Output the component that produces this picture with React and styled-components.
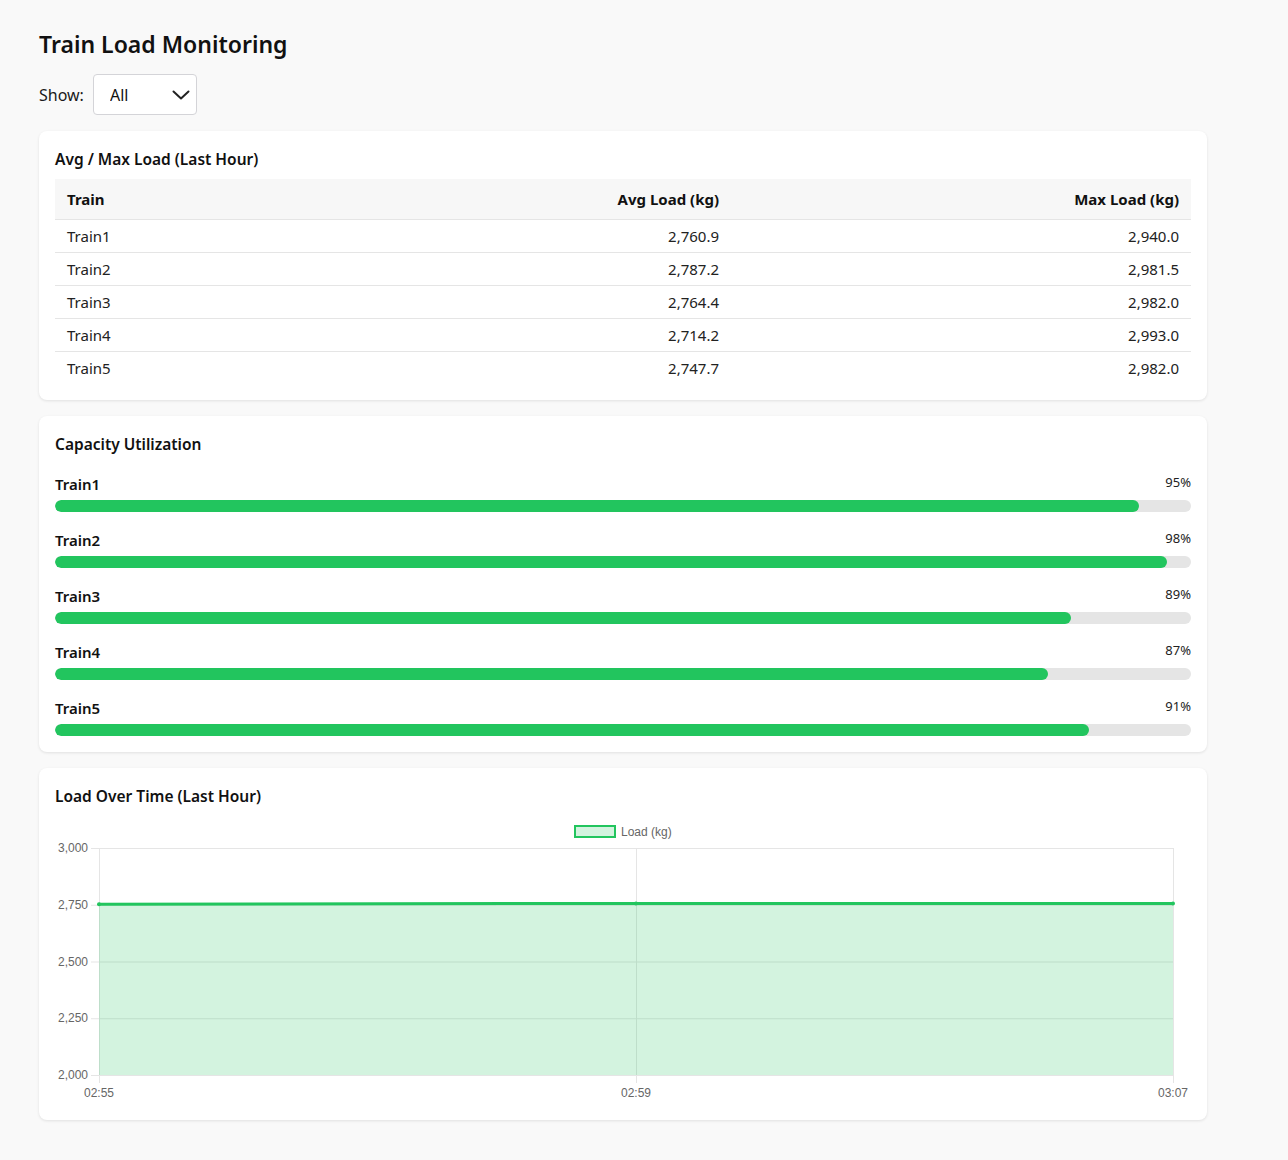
import React, { useState } from 'react'
import styled, { createGlobalStyle } from 'styled-components'

const GlobalStyle = createGlobalStyle`
  body {
    margin: 0;
    background: #f9f9f9;
    font-family: "Noto Sans", "Liberation Sans", sans-serif;
    color: #1a1a1a;
  }
`;

const trains = [
  { name: 'Train1', avg: 2760.9, max: 2940.0, util: 95.4 },
  { name: 'Train2', avg: 2787.2, max: 2981.5, util: 97.9 },
  { name: 'Train3', avg: 2764.4, max: 2982.0, util: 89.4 },
  { name: 'Train4', avg: 2714.2, max: 2993.0, util: 87.4 },
  { name: 'Train5', avg: 2747.7, max: 2982.0, util: 91.0 },
];

const fmt = (n) => n.toLocaleString('en-US', { minimumFractionDigits: 1, maximumFractionDigits: 1 });

export default function App() {
  const [show, setShow] = useState('All');
  return (
    <Page>
      <GlobalStyle />
      <Title>Train Load Monitoring</Title>
      <Filter>
        <span>Show:</span>
        <SelectWrap>
          <Select value={show} onChange={(e) => setShow(e.target.value)}>
            <option>All</option>
            {trains.map((t) => <option key={t.name}>{t.name}</option>)}
          </Select>
          <Chevron width="18" height="10" viewBox="0 0 18 10">
            <polyline points="1.5,1.5 9,8.5 16.5,1.5" fill="none" stroke="#222" strokeWidth="2" strokeLinecap="round" strokeLinejoin="round" />
          </Chevron>
        </SelectWrap>
      </Filter>

      <Card>
        <CardTitle>Avg / Max Load (Last Hour)</CardTitle>
        <Table>
          <colgroup>
            <col style={{ width: 338 }} />
            <col style={{ width: 338 }} />
            <col />
          </colgroup>
          <thead>
            <tr>
              <Th>Train</Th>
              <Th align="right">Avg Load (kg)</Th>
              <Th align="right">Max Load (kg)</Th>
            </tr>
          </thead>
          <tbody>
            {trains.map((t) => (
              <tr key={t.name}>
                <Td>{t.name}</Td>
                <Td align="right">{fmt(t.avg)}</Td>
                <Td align="right">{fmt(t.max)}</Td>
              </tr>
            ))}
          </tbody>
        </Table>
      </Card>

      <Card>
        <CardTitle $gap={18}>Capacity Utilization</CardTitle>
        {trains.map((t) => (
          <BarItem key={t.name}>
            <BarHead>
              <BarLabel>{t.name}</BarLabel>
              <BarPct>{Math.round(t.util)}%</BarPct>
            </BarHead>
            <Track>
              <Fill style={{ width: `${t.util}%` }} />
            </Track>
          </BarItem>
        ))}
      </Card>

      <Card>
        <CardTitle>Load Over Time (Last Hour)</CardTitle>
        <LoadChart />
      </Card>
    </Page>
  );
}

function LoadChart() {
  const left = 44, right = 1118, top = 32, bottom = 259;
  const yOf = (v) => bottom - ((v - 2000) / 1000) * (bottom - top);
  const pts = [
    { x: left, v: 2752, label: '02:55' },
    { x: (left + right) / 2, v: 2756, label: '02:59' },
    { x: right, v: 2756, label: '03:07' },
  ];
  const ticks = [3000, 2750, 2500, 2250, 2000];
  const line = pts.map((p) => `${p.x},${yOf(p.v)}`).join(' ');
  const area = `${left},${bottom} ${line} ${right},${bottom}`;
  return (
    <ChartSvg viewBox="0 0 1136 288" width="1136" height="288">
      <rect x="520" y="10" width="40" height="11" fill="rgba(34,197,94,0.2)" stroke="#22c55e" strokeWidth="2" />
      <text x="566" y="17" fontSize="12" fill="#666" dominantBaseline="middle">Load (kg)</text>
      {ticks.map((t) => (
        <g key={t}>
          <line x1={36} x2={right} y1={yOf(t) + 0.5} y2={yOf(t) + 0.5} stroke="#e5e5e5" />
          <text x="33" y={yOf(t) + 1} fontSize="12" fill="#666" textAnchor="end" dominantBaseline="middle">
            {t.toLocaleString('en-US')}
          </text>
        </g>
      ))}
      {pts.map((p) => (
        <g key={p.label}>
          <line x1={p.x + 0.5} x2={p.x + 0.5} y1={top} y2={bottom + 8} stroke="#e5e5e5" />
          <text x={p.x} y={278} fontSize="12" fill="#666" textAnchor="middle" dominantBaseline="middle">{p.label}</text>
        </g>
      ))}
      <polygon points={area} fill="rgba(34,197,94,0.2)" />
      <polyline points={line} fill="none" stroke="#22c55e" strokeWidth="3" />
      {pts.map((p) => (
        <circle key={p.label} cx={p.x} cy={yOf(p.v)} r="2" fill="#22c55e" />
      ))}
    </ChartSvg>
  );
}

const Page = styled.div`
  width: 1168px;
  padding: 24px 39px 40px;
  display: flex;
  flex-direction: column;
  gap: 16px;
`;

const Title = styled.h1`
  margin: 4px 0 -2px;
  font-size: 23px;
  font-weight: 600;
  line-height: 32px;
  color: #111;
`;

const Filter = styled.div`
  display: flex;
  align-items: center;
  gap: 9px;
  font-size: 16px;
`;

const SelectWrap = styled.div`
  position: relative;
  width: 104px;
  height: 41px;
`;

const Select = styled.select`
  appearance: none;
  width: 100%;
  height: 100%;
  padding: 0 16px;
  font: inherit;
  font-size: 16px;
  color: #111;
  background: #fff;
  border: 1px solid #d4d4d8;
  border-radius: 4px;
  outline: none;
`;

const Chevron = styled.svg`
  position: absolute;
  right: 7px;
  top: 16px;
  pointer-events: none;
`;

const Card = styled.section`
  background: #fff;
  border-radius: 8px;
  padding: 16px;
  box-shadow: 0 1px 3px rgba(0, 0, 0, 0.1);
`;

const CardTitle = styled.h2`
  margin: 0 0 ${(p) => p.$gap ?? 8}px;
  font-size: 15.5px;
  font-weight: 600;
  line-height: 24px;
  color: #111;
`;

const Table = styled.table`
  width: 100%;
  border-collapse: collapse;
  table-layout: fixed;
  font-size: 15px;
`;

const Th = styled.th`
  background: #f7f7f7;
  text-align: ${(p) => p.align || 'left'};
  font-weight: 700;
  padding: 0 12px;
  height: 40px;
  border-bottom: 1px solid #e5e5e5;
  color: #111;
`;

const Td = styled.td`
  text-align: ${(p) => p.align || 'left'};
  padding: 0 12px;
  height: 32px;
  border-bottom: 1px solid #e5e5e5;
  color: #222;
  tr:last-child > & {
    border-bottom: none;
  }
`;

const BarItem = styled.div`
  margin-bottom: 18px;
  &:last-child {
    margin-bottom: 0;
  }
`;

const BarHead = styled.div`
  display: flex;
  justify-content: space-between;
  align-items: flex-start;
  height: 20px;
  margin-bottom: 6px;
`;

const BarLabel = styled.span`
  font-size: 15px;
  font-weight: 600;
  line-height: 20px;
  color: #111;
`;

const BarPct = styled.span`
  font-size: 13px;
  line-height: 16px;
  color: #222;
`;

const Track = styled.div`
  height: 12px;
  border-radius: 6px;
  background: #e5e5e5;
  overflow: hidden;
`;

const Fill = styled.div`
  height: 100%;
  border-radius: 6px;
  background: #22c55e;
`;

const ChartSvg = styled.svg`
  display: block;
  margin-top: 8px;
  font-family: "Liberation Sans", Arial, sans-serif;
`;
